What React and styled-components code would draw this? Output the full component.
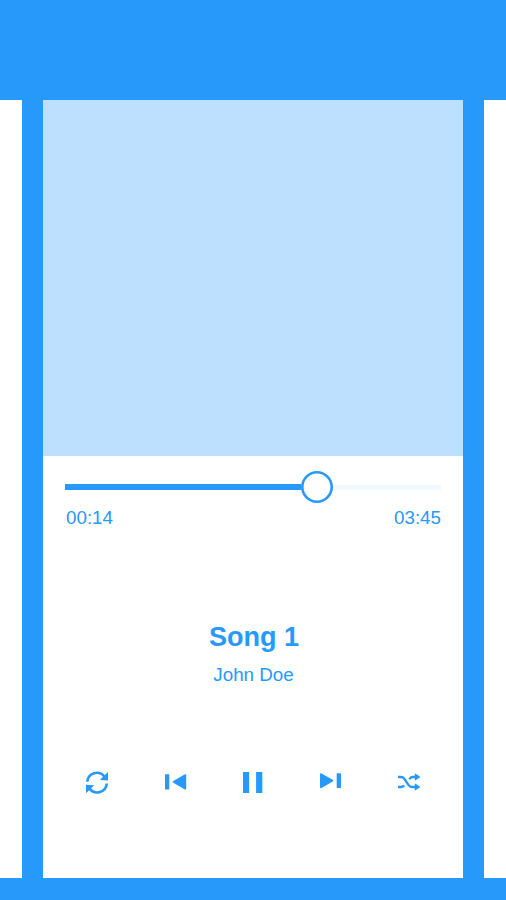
import React from "react";
import styled, { createGlobalStyle } from "styled-components";

const BLUE = "#2699fb";

const GlobalStyle = createGlobalStyle`
  *, *::before, *::after { box-sizing: border-box; }
  body { margin: 0; background: ${BLUE}; overflow: hidden; }
`;

const Screen = styled.main`
  width: 506px;
  height: 900px;
  padding: 99.5px 0 22px;
  display: grid;
  grid-template-columns: 22px 420px 22px;
  column-gap: 21px;
  overflow: hidden;
  background: ${BLUE};
  color: ${BLUE};
  font-family: "Liberation Sans", Arial, sans-serif;
`;

const Card = styled.section`
  background: #fff;
  display: flex;
  flex-direction: column;
`;

const Artwork = styled.div`
  height: 356.5px;
  flex: none;
  background: #bce0fd;
`;

const Progress = styled.div`
  display: flex;
  align-items: center;
  height: 32px;
  margin: 15px 22px 0;
`;

const Track = styled.div`
  height: ${(p) => (p.$filled ? "6px" : "5px")};
  width: ${(p) => p.$width};
  flex: ${(p) => (p.$width ? "none" : 1)};
  background: ${(p) => (p.$filled ? BLUE : "#f1f9ff")};
`;

const Thumb = styled.div`
  width: 32px;
  height: 32px;
  flex: none;
  border-radius: 50%;
  background: #fff;
  box-shadow: inset 0 0 0 2.6px ${BLUE};
`;

const Times = styled.div`
  display: flex;
  justify-content: space-between;
  margin: 4px 22px 0 23px;
  font-size: 18.8px;
  line-height: 22px;
`;

const Title = styled.h1`
  margin: 92px 0 0;
  padding-left: 2px;
  text-align: center;
  font-size: 27px;
  line-height: 32px;
`;

const Artist = styled.p`
  margin: 11px 0 0;
  padding-left: 1px;
  text-align: center;
  font-size: 18.8px;
  line-height: 22px;
`;

const Controls = styled.div`
  display: flex;
  justify-content: space-between;
  margin: 81px 39px 0 39px;
`;

const Control = styled.button`
  padding: 0;
  border: 0;
  background: none;
  color: inherit;
  width: 30px;
  height: 30px;

  svg { display: block; }
`;

const Glyph = ({ children }) => (
  <svg width="30" height="30" viewBox="0 0 30 30" fill="currentColor">
    {children}
  </svg>
);

const RepeatIcon = () => (
  <Glyph>
    <path
      d="M5.3 14.7A9.5 9.3 0 0 1 22.4 9.6M24.7 16.5A9.5 9.3 0 0 1 7.6 21.6"
      fill="none"
      stroke="currentColor"
      strokeWidth="2.6"
    />
    <path d="M26 5v8.4l-8-.5 2.2-2.5zM4 26.2v-8.4l8 .5-2.2 2.5z" />
  </Glyph>
);

const PreviousIcon = () => (
  <Glyph>
    <rect x="5" y="7.2" width="4.3" height="15.4" rx=".6" />
    <path d="M13.4 14 24.4 7.6Q26.2 6.6 26.2 8.5v12.8q0 2-1.8 1L13.4 15.8q-1.4-.9 0-1.8z" />
  </Glyph>
);

const PauseIcon = () => (
  <Glyph>
    <path d="M5 5h6.2v21H5zM18.1 5h6.2v21h-6.2z" />
  </Glyph>
);

const NextIcon = () => (
  <Glyph>
    <path d="M4 7.2q0-1.6 1.5-.8l11.2 6.4q1.4.9 0 1.8L5.5 20.9q-1.5.8-1.5-.8z" />
    <rect x="20.7" y="6.2" width="4.3" height="14.8" rx=".5" />
  </Glyph>
);

const ShuffleIcon = () => (
  <Glyph>
    <path
      d="M4 10H6.8q2.2 0 3.6 1.9l4.2 6.2q1.3 1.9 3.5 1.9H22M15.4 12.2q1.2-2.2 3.2-2.2H22M4 20H6.8q2 0 3.4-1.6"
      fill="none"
      stroke="currentColor"
      strokeWidth="2.4"
    />
    <path d="M20.8 7.1q0-.9.8-.4l3.9 2.5q1.1.8 0 1.6l-3.9 2.5q-.8.5-.8-.4zM20.8 17.1q0-.9.8-.4l3.9 2.5q1.1.8 0 1.6l-3.9 2.5q-.8.5-.8-.4z" />
  </Glyph>
);

const CONTROLS = [
  ["Repeat", RepeatIcon],
  ["Previous", PreviousIcon],
  ["Pause", PauseIcon],
  ["Next", NextIcon],
  ["Shuffle", ShuffleIcon],
];

export default function App() {
  return (
    <>
      <GlobalStyle />
      <Screen>
        <Card />
        <Card>
          <Artwork />
          <Progress>
            <Track $filled $width="236px" />
            <Thumb />
            <Track />
          </Progress>
          <Times>
            <span>00:14</span>
            <span>03:45</span>
          </Times>
          <Title>Song 1</Title>
          <Artist>John Doe</Artist>
          <Controls>
            {CONTROLS.map(([label, Icon]) => (
              <Control key={label} aria-label={label}>
                <Icon />
              </Control>
            ))}
          </Controls>
        </Card>
        <Card />
      </Screen>
    </>
  );
}
